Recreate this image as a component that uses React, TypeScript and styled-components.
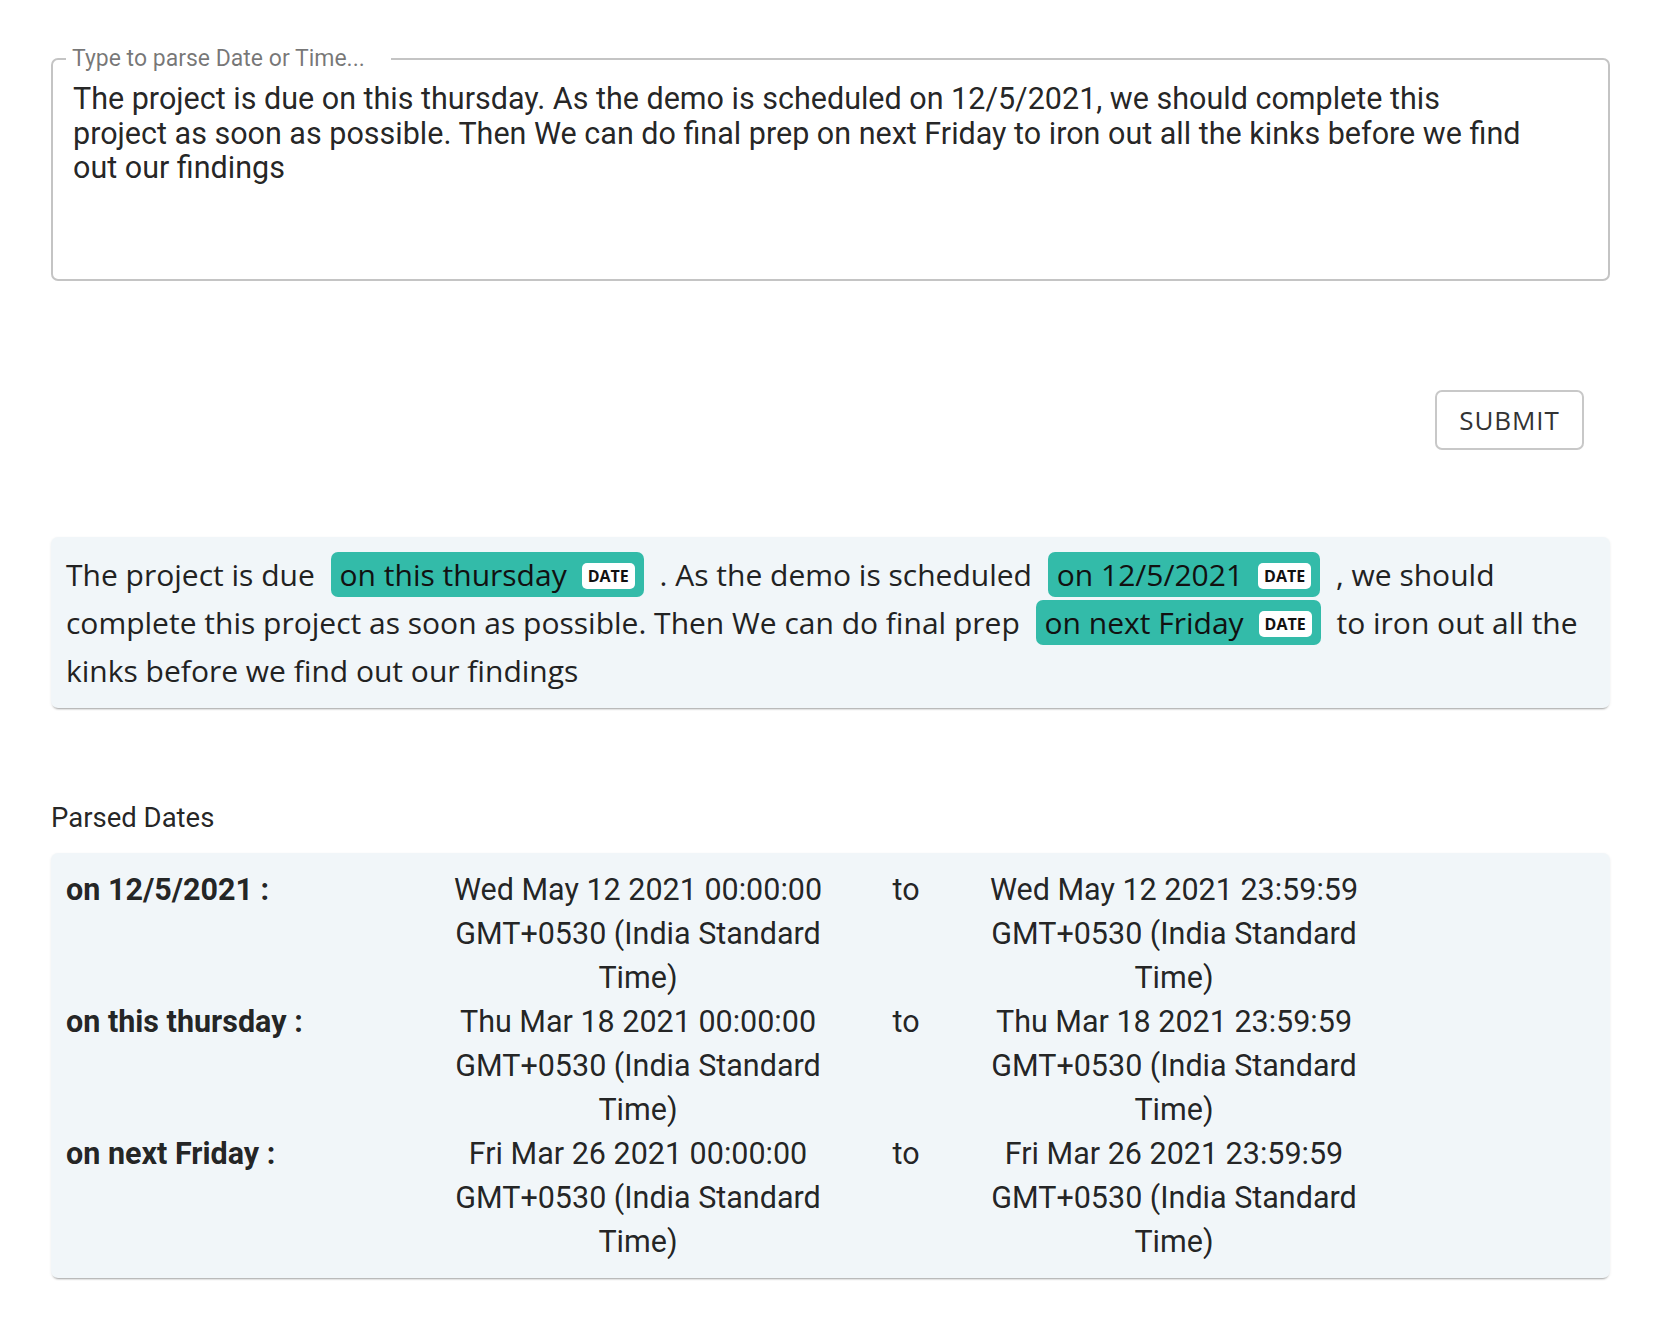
import React from "react";
import styled, { createGlobalStyle } from "styled-components";

const GlobalStyle = createGlobalStyle`
  body {
    margin: 0;
    background: #ffffff;
    font-family: Roboto, "Liberation Sans", Arial, sans-serif;
    color: rgba(0, 0, 0, 0.87);
  }
  * { box-sizing: border-box; }
`;

type Piece = { text: string; ent?: boolean };

const pieces: Piece[] = [
  { text: "The project is due " },
  { text: "on this thursday", ent: true },
  { text: " . As the demo is scheduled " },
  { text: "on 12/5/2021", ent: true },
  { text: " , we should complete this project as soon as possible. Then We can do final prep " },
  { text: "on next Friday", ent: true },
  { text: " to iron out all the kinks before we find out our findings" },
];

const parsed = [
  {
    name: "on 12/5/2021 :",
    from: "Wed May 12 2021 00:00:00 GMT+0530 (India Standard Time)",
    to: "Wed May 12 2021 23:59:59 GMT+0530 (India Standard Time)",
  },
  {
    name: "on this thursday :",
    from: "Thu Mar 18 2021 00:00:00 GMT+0530 (India Standard Time)",
    to: "Thu Mar 18 2021 23:59:59 GMT+0530 (India Standard Time)",
  },
  {
    name: "on next Friday :",
    from: "Fri Mar 26 2021 00:00:00 GMT+0530 (India Standard Time)",
    to: "Fri Mar 26 2021 23:59:59 GMT+0530 (India Standard Time)",
  },
];

const inputText =
  "The project is due on this thursday. As the demo is scheduled on 12/5/2021, we should complete this project as soon as possible. Then We can do final prep on next Friday to iron out all the kinks before we find out our findings";

const App = () => {
  return (
    <>
      <GlobalStyle />
      <Page>
        <Outline>
          <Legend>Type to parse Date or Time...</Legend>
          <TextArea defaultValue={inputText} spellCheck={false} />
        </Outline>

        <ButtonRow>
          <SubmitButton>SUBMIT</SubmitButton>
        </ButtonRow>

        <EntityCard>
          {pieces.map((p, i) =>
            p.ent ? (
              <Mark key={i}>
                {p.text}
                <Tag>DATE</Tag>
              </Mark>
            ) : (
              <span key={i}>{p.text}</span>
            )
          )}
        </EntityCard>

        <SectionTitle>Parsed Dates</SectionTitle>
        <DatesCard>
          {parsed.map((row) => (
            <DateRow key={row.name}>
              <RowName>{row.name}</RowName>
              <DateCell>{row.from}</DateCell>
              <ToCell>to</ToCell>
              <DateCell>{row.to}</DateCell>
            </DateRow>
          ))}
        </DatesCard>
      </Page>
    </>
  );
};

export default App;

const Page = styled.div`
  padding: 47px 50px 40px 51px;
`;

const Outline = styled.fieldset`
  margin: 0;
  padding: 0 20px;
  border: 2px solid #c4c4c4;
  border-radius: 7px;
  height: 234px;
`;

const Legend = styled.legend`
  margin-left: -7px;
  padding: 0 26px 0 6px;
  font-size: 23px;
  line-height: 1;
  color: rgba(0, 0, 0, 0.54);
`;

const TextArea = styled.textarea`
  display: block;
  width: 100%;
  height: 185px;
  margin-top: 12px;
  padding: 0 58px 0 0;
  border: none;
  outline: none;
  resize: none;
  background: transparent;
  font-family: Roboto, "Liberation Sans", Arial, sans-serif;
  font-size: 30.5px;
  line-height: 34.5px;
  color: rgba(0, 0, 0, 0.87);
`;

const ButtonRow = styled.div`
  display: flex;
  justify-content: flex-end;
  padding-right: 26px;
  margin-top: 109px;
`;

const SubmitButton = styled.button`
  height: 60px;
  width: 149px;
  border: 2px solid #c8c8c8;
  border-radius: 7px;
  background: #ffffff;
  font-family: "Open Sans", "Liberation Sans", sans-serif;
  font-size: 26px;
  letter-spacing: 0.9px;
  color: #333333;
  cursor: pointer;
`;

const EntityCard = styled.div`
  margin-top: 87px;
  padding: 14px 15px 13px;
  background: #f1f6f9;
  border-radius: 7px;
  box-shadow: 0 3px 2px -2px rgba(0, 0, 0, 0.32), 0 1px 3px rgba(0, 0, 0, 0.08);
  font-family: "Open Sans", "Liberation Sans", sans-serif;
  font-size: 30px;
  line-height: 48px;
  color: #222222;
`;

const Mark = styled.mark`
  display: inline;
  margin: 0 8px;
  padding: 2px 9px;
  background: #33bba9;
  border-radius: 7px;
  color: #111111;
  box-decoration-break: clone;
`;

const Tag = styled.span`
  display: inline-block;
  margin-left: 15px;
  padding: 5px 6px;
  background: #ffffff;
  border-radius: 5px;
  font-size: 16px;
  font-weight: 700;
  line-height: 1;
  vertical-align: middle;
  position: relative;
  top: -2px;
  color: #111111;
`;

const SectionTitle = styled.div`
  margin-top: 93px;
  font-size: 27.5px;
  line-height: 33px;
`;

const DatesCard = styled.div`
  margin-top: 19px;
  padding: 15px 15px 14px;
  background: #f1f6f9;
  border-radius: 7px;
  box-shadow: 0 3px 2px -2px rgba(0, 0, 0, 0.32), 0 1px 3px rgba(0, 0, 0, 0.08);
`;

const DateRow = styled.div`
  display: grid;
  grid-template-columns: 377px 390px 146px 390px;
  font-size: 30.5px;
  line-height: 44px;
`;

const RowName = styled.div`
  font-weight: 700;
`;

const DateCell = styled.div`
  text-align: center;
`;

const ToCell = styled.div`
  text-align: center;
`;
